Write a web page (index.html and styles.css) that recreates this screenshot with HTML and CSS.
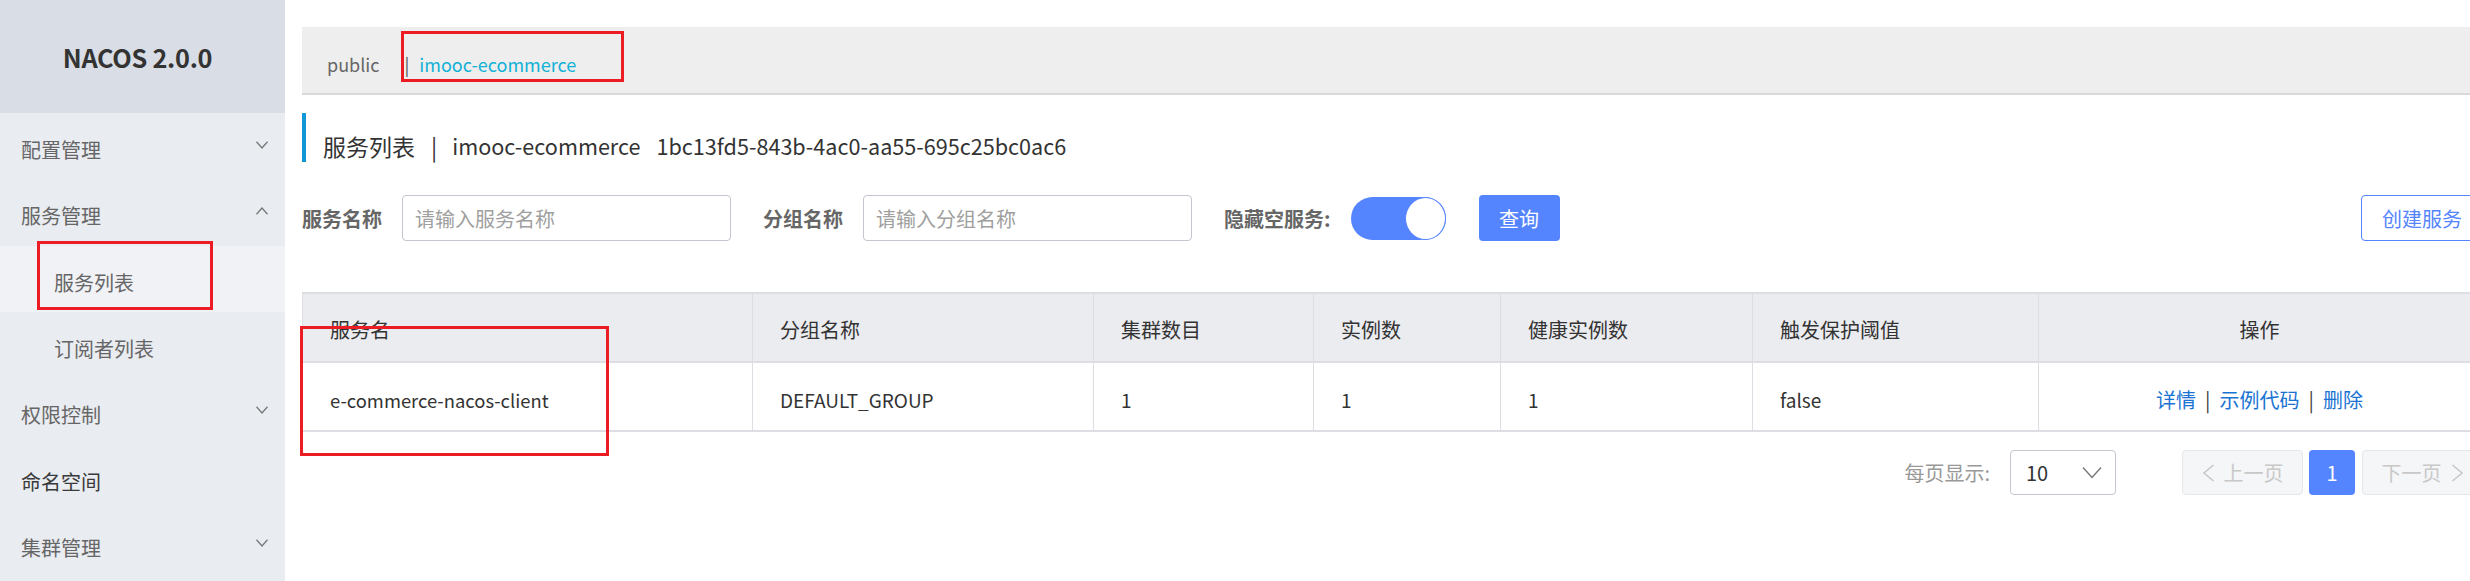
FILE: index.html
```html
<!DOCTYPE html>
<html lang="zh-CN">
<head>
<meta charset="utf-8">
<title>Nacos 服务列表</title>
<link rel="stylesheet" href="styles.css">
</head>
<body>
<div class="page">
  <aside class="sidebar">
    <div class="logo">NACOS 2.0.0</div>
    <nav class="menu">
      <div class="menu-item"><span>配置管理</span><svg class="chev" viewBox="0 0 12 8"><path d="M0.5 0.8 L6 7 L11.5 0.8"/></svg></div>
      <div class="menu-item"><span>服务管理</span><svg class="chev" viewBox="0 0 12 8"><path d="M0.5 7.2 L6 1 L11.5 7.2"/></svg></div>
      <div class="menu-item sub active"><span>服务列表</span><div class="mark mark-side"></div></div>
      <div class="menu-item sub"><span>订阅者列表</span></div>
      <div class="menu-item"><span>权限控制</span><svg class="chev" viewBox="0 0 12 8"><path d="M0.5 0.8 L6 7 L11.5 0.8"/></svg></div>
      <div class="menu-item plain"><span>命名空间</span></div>
      <div class="menu-item"><span>集群管理</span><svg class="chev" viewBox="0 0 12 8"><path d="M0.5 0.8 L6 7 L11.5 0.8"/></svg></div>
    </nav>
  </aside>
  <main class="main">
    <div class="ns-bar">
      <span class="ns-public">public</span>
      <span class="ns-current"><span class="ns-sep">|</span>imooc-ecommerce<span class="mark mark-ns"></span></span>
    </div>
    <div class="title">
      <span>服务列表</span><span class="title-sep">|</span><span class="title-ns latin">imooc-ecommerce</span><span class="latin">1bc13fd5-843b-4ac0-aa55-695c25bc0ac6</span>
    </div>
    <div class="filters">
      <label class="flabel">服务名称</label>
      <div class="input">请输入服务名称</div>
      <label class="flabel">分组名称</label>
      <div class="input">请输入分组名称</div>
      <label class="flabel">隐藏空服务:</label>
      <span class="switch"><span class="knob"></span></span>
      <button class="btn-primary">查询</button>
      <button class="btn-outline">创建服务</button>
    </div>
    <div class="table-wrap">
      <table class="grid">
        <colgroup>
          <col class="c1"><col class="c2"><col class="c3"><col class="c4"><col class="c5"><col class="c6"><col class="c7">
        </colgroup>
        <thead>
          <tr><th>服务名</th><th>分组名称</th><th>集群数目</th><th>实例数</th><th>健康实例数</th><th>触发保护阈值</th><th class="center">操作</th></tr>
        </thead>
        <tbody>
          <tr><td class="svc">e-commerce-nacos-client</td><td>DEFAULT_GROUP</td><td>1</td><td>1</td><td>1</td><td>false</td><td class="center ops"><a>详情</a><span class="op-sep">|</span><a>示例代码</a><span class="op-sep">|</span><a>删除</a></td></tr>
        </tbody>
      </table>
      <div class="mark mark-table"></div>
    </div>
    <div class="pager">
      <span class="page-size-label">每页显示:</span>
      <div class="select"><span>10</span><svg class="sel-chev" viewBox="0 0 20 13"><path d="M1 1.5 L10 11.5 L19 1.5"/></svg></div>
      <div class="pg-btn prev"><svg class="pg-chev" viewBox="0 0 13 18"><path d="M11.5 1 L2 9 L11.5 17"/></svg><span>上一页</span></div>
      <div class="pg-num">1</div>
      <div class="pg-btn next"><span>下一页</span><svg class="pg-chev" viewBox="0 0 13 18"><path d="M1.5 1 L11 9 L1.5 17"/></svg></div>
    </div>
  </main>
</div>
</body>
</html>
```
FILE: styles.css
```css
html, body {
  margin: 0;
  padding: 0;
  overflow: hidden;
  background: #ffffff;
}
body {
  font-family: "Noto Sans CJK SC", "Noto Sans", sans-serif;
  color: #333333;
}
.page {
  display: flex;
  width: 2500px;
  min-height: 581px;
}

/* sidebar */
.sidebar {
  width: 285px;
  flex: none;
  background: #e9ecf1;
  min-height: 581px;
  position: relative;
}
.logo {
  height: 113px;
  box-sizing: border-box;
  padding-right: 10px;
  background: #d9dee6;
  display: flex;
  align-items: center;
  justify-content: center;
  font-weight: 700;
  font-size: 25.3px;
  color: #333333;
  letter-spacing: -0.3px;
}
.menu-item {
  height: 66.3px;
  box-sizing: border-box;
  padding: 7px 17px 0 21px;
  display: flex;
  align-items: center;
  justify-content: space-between;
  font-size: 20px;
  color: #666666;
  position: relative;
}
.menu-item.plain {
  color: #3a3a3a;
}
.menu-item.sub {
  padding-left: 54px;
}
.menu-item.active {
  background: #f1f2f6;
}
.chev {
  width: 12px;
  height: 8px;
  margin-top: -9px;
  fill: none;
  stroke: #777777;
  stroke-width: 1.3;
}

/* annotation boxes */
.mark {
  position: absolute;
  border: 3px solid #ec1c24;
  box-sizing: border-box;
  pointer-events: none;
}
.mark-side {
  left: 37px;
  top: -5px;
  width: 176px;
  height: 69px;
}

/* main */
.main {
  width: 2181px;
  flex: none;
  padding: 27px 0 0 17px;
}
.ns-bar {
  height: 68px;
  box-sizing: border-box;
  background: #eeeeee;
  border-bottom: 2px solid #d9d9d9;
  display: flex;
  align-items: center;
  padding: 8px 0 0 25px;
  font-size: 18px;
}
.ns-public {
  color: #666666;
}
.ns-current {
  position: relative;
  margin-left: 25px;
  color: #12b1d6;
}
.ns-sep {
  color: #555555;
  margin-right: 10px;
}
.mark-ns {
  left: -3px;
  top: -20px;
  width: 223px;
  height: 51px;
}
.title {
  margin-top: 18px;
  height: 49px;
  box-sizing: border-box;
  border-left: 4px solid #0f97d6;
  padding: 17px 0 0 17px;
  display: flex;
  align-items: center;
  font-size: 23px;
  color: #333333;
  line-height: 32px;
}
.title .latin {
  font-size: 21.6px;
}
.title-sep {
  margin: 0 15px 0 16px;
}
.title-ns {
  margin-right: 16px;
}

/* filters */
.filters {
  margin-top: 33px;
  height: 46px;
  display: flex;
  align-items: center;
}
.flabel {
  font-size: 20px;
  font-weight: 700;
  color: #666666;
  margin-right: 20px;
}
.input {
  width: 329px;
  height: 46px;
  box-sizing: border-box;
  border: 1px solid #c4c6cf;
  border-radius: 4px;
  display: flex;
  align-items: center;
  padding-left: 12px;
  font-size: 20px;
  color: #a0a0a0;
  margin-right: 32px;
}
.switch {
  width: 95px;
  height: 43px;
  border-radius: 22px;
  background: #5584ff;
  display: flex;
  justify-content: flex-end;
  margin-right: 33px;
}
.knob {
  width: 41px;
  height: 43px;
  border-radius: 50%;
  background: #ffffff;
  border: 1px solid #5584ff;
  box-sizing: border-box;
}
.btn-primary {
  width: 81px;
  height: 46px;
  border: none;
  border-radius: 4px;
  background: #5584ff;
  color: #ffffff;
  font: inherit;
  font-size: 20px;
  padding: 0;
}
.btn-outline {
  margin-left: auto;
  width: 122px;
  height: 46px;
  border: 1px solid #5584ff;
  border-radius: 4px;
  background: #ffffff;
  color: #5584ff;
  font: inherit;
  font-size: 20px;
  padding: 0;
}

/* table */
.table-wrap {
  position: relative;
  margin-top: 51px;
}
.grid {
  width: 2178px;
  table-layout: fixed;
  border-collapse: collapse;
  font-size: 20px;
  color: #333333;
}
.c1 { width: 450px; }
.c2 { width: 341px; }
.c3 { width: 220px; }
.c4 { width: 187px; }
.c5 { width: 252px; }
.c6 { width: 286px; }
.c7 { width: 442px; }
.grid th, .grid td {
  border: 1px solid #dcdee3;
  text-align: left;
  padding: 4px 0 0 27px;
  height: 69px;
  box-sizing: border-box;
  font-weight: 400;
  white-space: nowrap;
}
.grid thead th {
  background: #ebecf0;
  border-top-width: 2px;
  border-bottom-width: 2px;
}
.grid tbody td {
  padding-top: 6px;
  border-bottom-width: 2px;
  font-size: 19px;
}
.grid tbody td.svc {
  font-size: 18.4px;
}
.grid tbody td.ops {
  font-size: 20px;
}
.grid .center {
  text-align: center;
  padding-left: 0;
}
.ops a {
  color: #1a73d2;
}
.op-sep {
  color: #444444;
  margin: 0 9px;
}
.mark-table {
  left: -2px;
  top: 34px;
  width: 309px;
  height: 130px;
}

/* pager */
.pager {
  margin-top: 18px;
  height: 45px;
  display: flex;
  align-items: center;
  justify-content: flex-end;
  font-size: 20px;
}
.page-size-label {
  color: #999999;
  margin-right: 20px;
}
.select {
  width: 106px;
  height: 45px;
  box-sizing: border-box;
  border: 1px solid #c4c6cf;
  border-radius: 4px;
  display: flex;
  align-items: center;
  justify-content: space-between;
  padding: 0 13px 0 15px;
  color: #333333;
  margin-right: 66px;
}
.sel-chev {
  width: 20px;
  height: 13px;
  fill: none;
  stroke: #777777;
  stroke-width: 1.4;
}
.pg-btn {
  width: 121px;
  height: 45px;
  box-sizing: border-box;
  border: 1px solid #e6e7eb;
  border-radius: 4px;
  background: #f5f6f8;
  color: #c8c8c8;
  display: flex;
  align-items: center;
  justify-content: center;
  gap: 9px;
}
.pg-chev {
  width: 13px;
  height: 18px;
  fill: none;
  stroke: #c8c8c8;
  stroke-width: 1.6;
}
.pg-num {
  width: 46px;
  height: 45px;
  border-radius: 4px;
  background: #5584ff;
  color: #ffffff;
  display: flex;
  align-items: center;
  justify-content: center;
  margin: 0 7px 0 6px;
}
```
